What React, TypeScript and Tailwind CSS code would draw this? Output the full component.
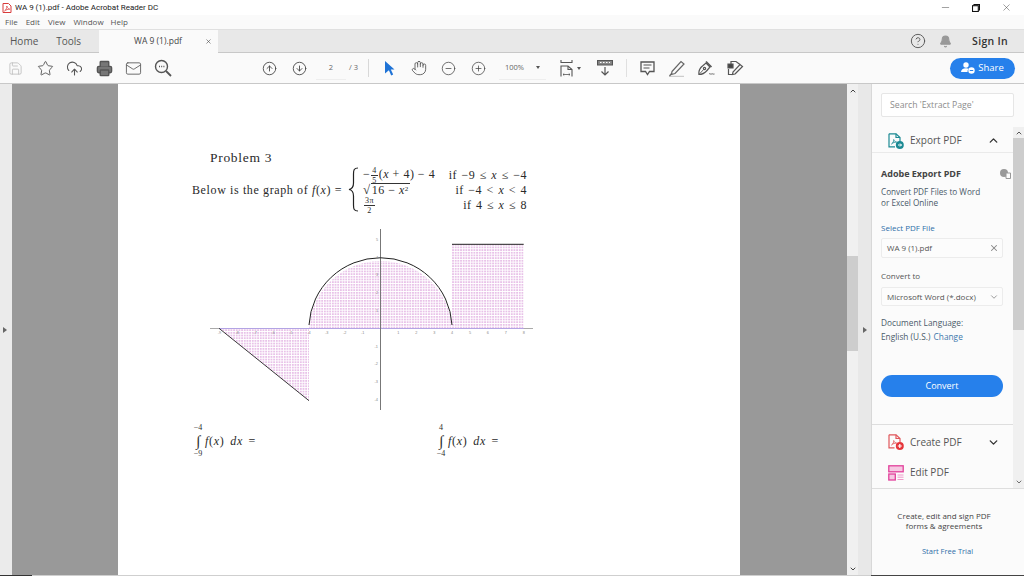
import React from 'react';
import {
  Bell, ChevronDown, ChevronUp, CircleArrowDown, CircleArrowUp, CircleHelp, CircleMinus, CirclePlus,
  CloudUpload, Hand, Mail, Minus, Printer, Save, Star, X,
} from 'lucide-react';

const ui = 'font-["Open_Sans","Noto_Sans",sans-serif]';
const tex = 'font-["Liberation_Serif",serif] text-[#2a2a2a]';

const ToolIcon: React.FC<{ children: React.ReactNode; className?: string }> = ({ children, className }) => (
  <div className={`w-[29.5px] h-[30px] flex items-center justify-center shrink-0 ${className ?? ''}`}>{children}</div>
);

const PdfLogo = () => (
  <svg width="10" height="10" viewBox="0 0 10 10" fill="none" stroke="#d83b3b" strokeWidth="1">
    <path d="M1 .5h5.500L9 3v6.500H1z" fill="#fff" />
    <path d="M2.500 8c1.500-1 2.500-3 2.300-5 .5 2 1.500 3 3 3.200-1.800 0-3.800.6-5.300 1.800z" strokeWidth=".7" />
  </svg>
);

const SearchDots = () => (
  <svg width="18" height="18" viewBox="0 0 18 18" fill="none" stroke="#555" strokeWidth="1.400">
    <circle cx="7.500" cy="7.500" r="6" />
    <path d="M12 12l5 5" strokeWidth="1.800" />
    <path d="M5 7.500h1M7.200 7.500h1M9.400 7.500h1" />
  </svg>
);

const Cursor = () => (
  <svg width="10" height="15" viewBox="0 0 10 15" fill="#1f73d6">
    <path d="M0 0l9.500 8.500H5.800l2.400 5-2 1-2.300-5.200L0 12.500z" />
  </svg>
);

const FitPage = () => (
  <div className="flex items-center gap-[4px]">
    <svg width="13" height="17" viewBox="0 0 13 17" fill="none" stroke="#555" strokeWidth="1.100">
      <path d="M1 0v2.500h11V0" />
      <path d="M1 16.500V6h7l4 3.500v7" />
      <path d="M8 6v3.500h4" />
      <path d="M3 14.500h7M3 14.500l1.200-1M3 14.500l1.200 1M10 14.500l-1.200-1M10 14.500l-1.200 1" strokeWidth=".8" />
    </svg>
    <div className="w-0 h-0 border-x-[2.5px] border-x-transparent border-t-[3px] border-t-[#555]" />
  </div>
);

const ScrollMode = () => (
  <svg width="16" height="16" viewBox="0 0 16 16" fill="none" stroke="#555" strokeWidth="1.200">
    <path d="M.5 .5h15v4.500H.5z" fill="#888" />
    <path d="M3 2.500h1.500M6 2.500h1.500M9 2.500h1.500M12 2.500h1" stroke="#fff" />
    <path d="M8 7v8M4.500 11.500L8 15l3.500-3.500" />
  </svg>
);

const CommentIcon = () => (
  <svg width="15" height="15" viewBox="0 0 15 15" fill="none" stroke="#555" strokeWidth="1.300">
    <path d="M1 1h13v9.500H9.500L7.500 13.500 5.500 10.500H1z" />
    <path d="M3.500 4h8M3.500 7h6" strokeWidth="1" />
  </svg>
);

const Highlighter = () => (
  <svg width="17" height="17" viewBox="0 0 17 17" fill="none" stroke="#666" strokeWidth="1.200">
    <path d="M4 11.500L13 1.500l3 2.500-9 9.500-3.500 1z" />
    <path d="M1 16.500h15" stroke="#ccc" strokeWidth="1.500" />
    <path d="M1.500 16l2.500-3" />
  </svg>
);

const SignPen = () => (
  <svg width="17" height="16" viewBox="0 0 17 16" fill="none" stroke="#555" strokeWidth="1.200">
    <path d="M1 14.500c-.5-3 1-6.500 3.500-8.500L8 3l4 4-3 3.500c-2 2.300-5 4-8 4z" />
    <path d="M8 1.500l5.500 5.500" strokeWidth="1.600" />
    <circle cx="6.500" cy="8.500" r="1.100" />
    <path d="M1 14.500l4.600-5M11 14c1-1 1.500.7 2.500 0s1.300.5 3 0" strokeWidth=".9" />
  </svg>
);

const Redact = () => (
  <svg width="17" height="16" viewBox="0 0 17 16" fill="none" stroke="#555" strokeWidth="1.200">
    <path d="M4 4V1.500h5L13 4.500" />
    <path d="M1.500 9v5.500h4" />
    <path d="M1 4h5v4H1z" fill="#444" />
    <path d="M8 14l7.500-7.500-2.500-2-7 7.500-.5 2.500z" />
  </svg>
);

const ShareIcon = () => (
  <svg width="14" height="12" viewBox="0 0 14 12" fill="#fff">
    <circle cx="5" cy="3" r="2.700" />
    <path d="M0 10c0-2.500 2-3.800 5-3.800 1 0 2 .2 2.700.5A4 4 0 0 0 6.500 10z" />
    <circle cx="10.500" cy="8.500" r="3.200" />
    <path d="M8.800 8.500h3.400" stroke="#2680eb" strokeWidth="1" />
  </svg>
);

const ExportIcon = () => (
  <svg width="16" height="16" viewBox="0 0 16 16" fill="none" stroke="#1d8a94" strokeWidth="1.200">
    <path d="M1 .8h7l4 3.700v5M1 .8v13h6" />
    <path d="M8 .8v3.700h4" />
    <path d="M3.500 11c1.500-1 2.500-3 2.200-4.500.5 1.500 1.200 2.300 2.800 2.500-1.800 0-3.500.7-5 2z" strokeWidth=".8" />
    <circle cx="11.800" cy="12" r="4" fill="#1d8a94" stroke="none" />
    <path d="M10 12h3.500M12 10.500l1.500 1.500-1.500 1.500" stroke="#fff" strokeWidth="1" />
  </svg>
);

const CreateIcon = () => (
  <svg width="16" height="16" viewBox="0 0 16 16" fill="none" stroke="#e0575b" strokeWidth="1.200">
    <path d="M1 .8h7l4 3.700v4M1 .8v13h5.500" />
    <path d="M8 .8v3.700h4" />
    <path d="M3.500 11c1.500-1 2.500-3 2.200-4.500.5 1.500 1.200 2.300 2.800 2.500-1.800 0-3.500.7-5 2z" strokeWidth=".8" />
    <circle cx="11.800" cy="12" r="4" fill="#e5343a" stroke="none" />
    <path d="M9.800 12h4M11.800 10v4" stroke="#fff" strokeWidth="1.200" />
  </svg>
);

const EditIcon = () => (
  <svg width="16" height="16" viewBox="0 0 16 16" fill="none" stroke="#e2409b" strokeWidth="1.300">
    <rect x=".8" y=".8" width="14.400" height="6" fill="#f6c8e2" />
    <rect x=".8" y="9" width="6.500" height="6" fill="#f6c8e2" />
    <path d="M9.500 10h6M9.500 12.200h6M9.500 14.500h6" strokeWidth=".9" stroke="#ee8cc4" />
  </svg>
);

const Frac: React.FC<{ top: string; bottom: string }> = ({ top, bottom }) => (
  <span className="inline-flex flex-col items-center align-middle text-[8px] leading-[7px] mx-[1px]">
    <span className="px-[1px] border-b border-[#333] pb-[1px]">{top}</span>
    <span className="pt-[1px]">{bottom}</span>
  </span>
);

const Integral: React.FC<{ upper: string; lower: string }> = ({ upper, lower }) => (
  <div className="flex items-center w-[243px] shrink-0">
    <div className="flex flex-col items-center w-[12px] text-[8px] leading-[10px]">
      <span>{upper}</span>
      <span className="text-[15px] leading-[16px] italic">∫</span>
      <span>{lower}</span>
    </div>
    <span className="ml-[1px] text-[12px] tracking-[.7px] [word-spacing:2px]"><i>f</i>(<i>x</i>) <i>dx</i> =</span>
  </div>
);

const xTicks = [-9, -8, -7, -6, -5, -4, -3, -2, -1, 1, 2, 3, 4, 5, 6, 7, 8];
const yTicks = [-4, -3, -2, -1, 1, 2, 3, 4, 5];

const Graph = () => {
  const px = (v: number) => 380.5 + v * 17.9;
  const py = (v: number) => 328.3 - v * 17.8;
  return (
    <svg width="340" height="190" viewBox="200 225 340 190" className="ml-[8px] mt-[13px] block">
      <defs>
        <pattern id="hatch" patternUnits="userSpaceOnUse" width="2.670" height="2.670">
          <rect width="2.670" height="2.670" fill="#e8c2e8" />
          <path d="M0 .4h2.670M.4 0v2.670" stroke="#fff" strokeWidth=".9" />
        </pattern>
      </defs>
      <path d="M219 328.300L309 328.300L309 400.700Z" fill="url(#hatch)" />
      <path d="M309 328.300A71.600 71 0 0 1 452 328.300Z" fill="url(#hatch)" />
      <rect x="452" y="244.300" width="71.700" height="84" fill="url(#hatch)" />
      <path d="M210 328.500H533" stroke="#aaa" strokeWidth="1" />
      <path d="M219 328.500H523.700" stroke="#b3a4e4" strokeWidth="1" />
      <path d="M380.500 229V410" stroke="#777" strokeWidth="1" />
      <path d="M219 328.300L309 400.700" stroke="#222" strokeWidth=".9" fill="none" />
      <path d="M309 325A71.600 71 0 0 1 452 325" stroke="#222" strokeWidth="1" fill="none" />
      <path d="M452 244.300H523.700" stroke="#222" strokeWidth="1" fill="none" />
      {xTicks.map(v => (
        <text key={v} x={px(v)} y={334} fontSize="3.800" fill="#888" textAnchor="middle" fontFamily="Liberation Sans">{v}</text>
      ))}
      {yTicks.map(v => (
        <text key={v} x={378} y={py(v) + 1.500} fontSize="3.800" fill="#888" textAnchor="end" fontFamily="Liberation Sans">{v}</text>
      ))}
    </svg>
  );
};

const PdfPage = () => (
  <div className={`w-[622px] shrink-0 bg-white pl-[74px] pt-[66px] ${tex}`}>
    <div className="ml-[18px] h-[15px] text-[13.500px] leading-[15px] tracking-[.7px]">Problem 3</div>
    <div className="flex items-center h-[45px] text-[12px] mt-[2px]">
      <span className="w-[156px] shrink-0 tracking-[.62px] whitespace-nowrap">Below is the graph of <i>f</i>(<i>x</i>) =</span>
      <svg width="11" height="45" viewBox="0 0 11 45" fill="none" stroke="#222" strokeWidth="1.200" className="shrink-0">
        <path d="M10 1C6 1 5.500 3 5.500 7v9c0 4-1.500 6-4.500 6.500 3 .5 4.500 2.500 4.500 6.500v9c0 4 .5 6 4.500 6" />
      </svg>
      <div className="ml-[4px] w-[164px] grid grid-cols-[auto_1fr] grid-rows-[15px_15px_15px] items-center whitespace-nowrap tracking-[.5px] [word-spacing:1px] text-[12px]">
        <span className="[word-spacing:0px]">−<Frac top="4" bottom="5" />(<i>x</i> + 4) − 4</span>
        <span className="text-right">if −9 ≤ <i>x</i> ≤ −4</span>
        <span className="flex items-center [word-spacing:0px]"><span className="text-[13px] leading-[12px]">√</span><span className="border-t border-[#333] leading-[12px] px-[1px]">16 − <i>x</i><sup className="text-[7px]">2</sup></span></span>
        <span className="text-right">if −4 &lt; <i>x</i> &lt; 4</span>
        <span><Frac top="3π" bottom="2" /></span>
        <span className="text-right">if 4 ≤ <i>x</i> ≤ 8</span>
      </div>
    </div>
    <Graph />
    <div className="flex mt-[8px]">
      <Integral upper="−4" lower="−9" />
      <Integral upper="4" lower="−4" />
    </div>
  </div>
);

const Field: React.FC<{ children: React.ReactNode; className?: string }> = ({ children, className }) => (
  <div className={`w-[122px] border border-[#ececec] rounded-[2px] bg-[#fcfcfc] flex items-center justify-between text-[#555] ${className ?? ''}`}>
    {children}
  </div>
);

const SideTool: React.FC<{ icon: React.ReactNode; label: string; chevron?: React.ReactNode; className?: string }> = ({ icon, label, chevron, className }) => (
  <div className={`flex items-center pl-[16px] pr-[13px] text-[10px] text-[#555] ${className ?? ''}`}>
    {icon}
    <span className="ml-[6px] flex-1">{label}</span>
    {chevron}
  </div>
);

const Triangle = () => (
  <div className="w-0 h-0 border-y-[3.500px] border-y-transparent border-l-[4px] border-l-[#666]" />
);

const RightPanel = () => (
  <div className={`w-[153px] shrink-0 border-l border-[#d8d8d8] bg-[#fbfbfb] flex flex-col ${ui}`}>
    <div className="h-[43px] shrink-0 pl-[9px] pt-[9px]">
      <div className="w-[133px] h-[24px] bg-white border border-[#e6e6e6] rounded-[2px] flex items-center pl-[8px] pt-[2px] text-[8.700px] text-[#8c8c8c]">
        Search 'Extract Page'
      </div>
    </div>
    <div className="h-[361px] shrink-0 flex">
      <div className="w-[141px] shrink-0 flex flex-col">
        <SideTool
          icon={<ExportIcon />}
          label="Export PDF"
          chevron={<ChevronUp size={13} strokeWidth={2.500} color="#333" />}
          className="h-[26px] pt-[2px] border-b border-[#eaeaea]"
        />
        <div className="pl-[9px] pt-[15px] h-[272px] border-b border-[#dedede] text-[8.500px] text-[#555]">
          <div className="flex items-center justify-between pr-[2px] h-[12px]">
            <span className="font-bold text-[#444] text-[9px]">Adobe Export PDF</span>
            <svg width="11" height="10" viewBox="0 0 11 10" fill="#999"><circle cx="4" cy="4" r="4" /><path d="M6 4h4.500v5.500H6z" fill="#fbfbfb" stroke="#999" /></svg>
          </div>
          <div className="mt-[6px] leading-[11px] text-[#4a5a6a] text-[8.200px]">Convert PDF Files to Word<br />or Excel Online</div>
          <div className="mt-[14px] h-[11px] leading-[11px] text-[#2d6ea8] text-[8px]">Select PDF File</div>
          <Field className="mt-[5px] h-[20px] pl-[5px] pr-[3px] text-[8px]"><span>WA 9 (1).pdf</span><X size={10} strokeWidth={2.500} color="#888" /></Field>
          <div className="mt-[12px] h-[12px] leading-[12px] text-[8px]">Convert to</div>
          <Field className="mt-[5px] h-[19px] pl-[5px] pr-[3px] text-[8px] whitespace-nowrap"><span>Microsoft Word (*.docx)</span><ChevronDown size={10} color="#888" /></Field>
          <div className="mt-[11px] h-[11px] leading-[11px] text-[#4a5a6a] text-[8.300px]">Document Language:</div>
          <div className="mt-[3px] h-[11px] leading-[11px] text-[#4a5a6a] text-[8.300px]">English (U.S.) <span className="ml-[1px] text-[#3d78ac]">Change</span></div>
          <div className="mt-[33px] w-[122px] h-[22px] rounded-full bg-[#2680eb] text-white text-[9px] flex items-center justify-center">Convert</div>
        </div>
        <SideTool
          icon={<CreateIcon />}
          label="Create PDF"
          chevron={<ChevronDown size={13} strokeWidth={2.500} color="#333" />}
          className="h-[33px] pt-[1px]"
        />
        <SideTool icon={<EditIcon />} label="Edit PDF" className="h-[28px] pt-[1px]" />
      </div>
      <div className="w-[11px] shrink-0 bg-[#f0f0f0] flex flex-col">
        <div className="h-[11px] flex items-center justify-center"><ChevronUp size={8} strokeWidth={3} color="#555" /></div>
        <div className="h-[192px] bg-[#cdcdcd]" />
        <div className="flex-1" />
        <div className="h-[11px] mb-[1px] flex items-center justify-center"><ChevronDown size={8} strokeWidth={2.500} color="#555" /></div>
      </div>
    </div>
    <div className="flex-1 border-t border-[#dedede] flex flex-col items-center text-center text-[8px] leading-[10px] text-[#444] pt-[22px] pr-[1px]">
      <div className="pr-[7px]">Create, edit and sign PDF<br />forms &amp; agreements</div>
      <div className="mt-[15px] text-[#2d6ea8] text-[7.500px]">Start Free Trial</div>
    </div>
  </div>
);

export default function App() {
  return (
    <div className={`w-[1024px] h-[576px] overflow-hidden flex flex-col bg-white ${ui}`}>
      {/* title bar */}
      <div className="h-[15px] shrink-0 bg-white flex items-center pl-[2px] text-[8px] text-[#222] whitespace-nowrap font-['Roboto',sans-serif]">
        <PdfLogo />
        <span className="ml-[3px]">WA 9 (1).pdf - Adobe Acrobat Reader DC</span>
        <div className="ml-auto flex items-center">
          <div className="w-[30px] flex justify-center"><Minus size={11} strokeWidth={1} color="#333" /></div>
          <div className="w-[31px] flex justify-center">
            <svg width="8" height="8" viewBox="0 0 8 8" fill="none" stroke="#111" strokeWidth="1.100"><rect x=".5" y="1.700" width="5.800" height="5.800" /><path d="M2 1.500V.5h5.500V6H6.500" /></svg>
          </div>
          <div className="w-[31px] mr-[2px] flex justify-center"><X size={11} strokeWidth={1} color="#333" /></div>
        </div>
      </div>
      {/* menu */}
      <div className="h-[14px] shrink-0 bg-[#fafafa] flex items-center pl-[5px] gap-[8px] text-[8px] text-[#555]">
        <span>File</span><span>Edit</span><span>View</span><span>Window</span><span className="-ml-[1px]">Help</span>
      </div>
      {/* tabs */}
      <div className="h-[24px] shrink-0 bg-[#e8e8e8] border-t border-[#e0e0e0] border-b border-b-[#c8c8c8] flex items-center text-[10px] text-[#555]">
        <span className="ml-[10px]">Home</span>
        <span className="ml-[18px]">Tools</span>
        <div className="ml-[18px] w-[119px] h-[23px] mt-[1px] bg-[#fafafa] flex items-center pl-[35px] text-[8.500px] text-[#444]">
          <span>WA 9 (1).pdf</span>
          <X size={7} strokeWidth={2} color="#444" className="ml-auto mr-[6px]" />
        </div>
        <CircleHelp size={16} strokeWidth={1.400} color="#555" className="ml-auto" />
        <Bell size={13} fill="#999" color="#999" className="ml-[13px]" />
        <span className="ml-[20px] mr-[16px] pt-[1px] text-[#333] text-[10.500px] font-semibold tracking-[.3px]">Sign In</span>
      </div>
      {/* toolbar */}
      <div className="h-[31px] shrink-0 bg-[#fafafa] border-b border-[#c8c8c8] flex items-center pl-[1px] text-[#555]">
        <ToolIcon><Save size={15} strokeWidth={1.300} color="#bbb" /></ToolIcon>
        <ToolIcon><Star size={17} strokeWidth={1.300} color="#555" /></ToolIcon>
        <ToolIcon><CloudUpload size={17} strokeWidth={1.500} color="#555" /></ToolIcon>
        <ToolIcon><Printer size={17} strokeWidth={2} color="#555" fill="#777" /></ToolIcon>
        <ToolIcon><Mail size={17} strokeWidth={1.200} color="#555" /></ToolIcon>
        <ToolIcon><SearchDots /></ToolIcon>
        <ToolIcon className="ml-[77px]"><CircleArrowUp size={15} strokeWidth={1.400} color="#444" /></ToolIcon>
        <ToolIcon><CircleArrowDown size={15} strokeWidth={1.400} color="#444" /></ToolIcon>
        <div className="w-[30px] h-[23px] ml-[2px] border-b border-[#eee] flex items-center justify-center text-[7.500px] text-[#666]">2</div>
        <span className="ml-[3px] text-[7.500px] text-[#666]">/ 3</span>
        <div className="ml-[10px] w-px h-[18px] bg-[#d8d8d8]" />
        <ToolIcon className="ml-[6px]"><Cursor /></ToolIcon>
        <ToolIcon><Hand size={16} strokeWidth={1.300} color="#555" /></ToolIcon>
        <ToolIcon><CircleMinus size={15} strokeWidth={1.200} color="#444" /></ToolIcon>
        <ToolIcon><CirclePlus size={15} strokeWidth={1.200} color="#444" /></ToolIcon>
        <div className="ml-[6px] w-[47px] h-[23px] border-b border-[#eee] flex items-center justify-between pl-[6px] pr-[6px] text-[7.500px] text-[#666]">
          <span>100%</span>
          <div className="w-0 h-0 border-x-[2.500px] border-x-transparent border-t-[3px] border-t-[#555]" />
        </div>
        <div className="ml-[13px] w-[22px] flex justify-center"><FitPage /></div>
        <ToolIcon className="ml-[9px]"><ScrollMode /></ToolIcon>
        <div className="ml-[6px] w-px h-[18px] bg-[#e0e0e0]" />
        <ToolIcon className="ml-[6px]"><CommentIcon /></ToolIcon>
        <ToolIcon><Highlighter /></ToolIcon>
        <ToolIcon><SignPen /></ToolIcon>
        <ToolIcon><Redact /></ToolIcon>
        <div className="ml-auto mr-[9px] w-[65px] h-[21px] rounded-full bg-[#2680eb] flex items-center justify-center gap-[3px] text-white text-[9.500px]">
          <ShareIcon />Share
        </div>
      </div>
      {/* document area */}
      <div className="flex-1 min-h-0 flex">
        <div className="w-[12px] shrink-0 bg-[#ebebeb] flex items-center justify-start pl-[3px]"><Triangle /></div>
        <div className="w-[106px] shrink-0 bg-[#999999]" />
        <PdfPage />
        <div className="w-[107px] shrink-0 bg-[#999999]" />
        <div className="w-[11px] shrink-0 bg-[#f0f0f0] flex flex-col">
          <div className="h-[13px] flex items-center justify-center"><ChevronUp size={8} strokeWidth={3} color="#444" /></div>
          <div className="mt-[159px] h-[95px] bg-[#cdcdcd]" />
          <div className="mt-auto h-[13px] flex items-center justify-center"><ChevronDown size={8} strokeWidth={3} color="#444" /></div>
        </div>
        <div className="w-[13px] shrink-0 bg-[#e8e8e8] flex items-center justify-center"><Triangle /></div>
        <RightPanel />
      </div>
      <div className="h-px shrink-0 flex bg-[#cfcfcf]">
        <div className="w-[32px] bg-[#333]" />
        <div className="ml-auto w-[153px] bg-[#444]" />
      </div>
    </div>
  );
}
